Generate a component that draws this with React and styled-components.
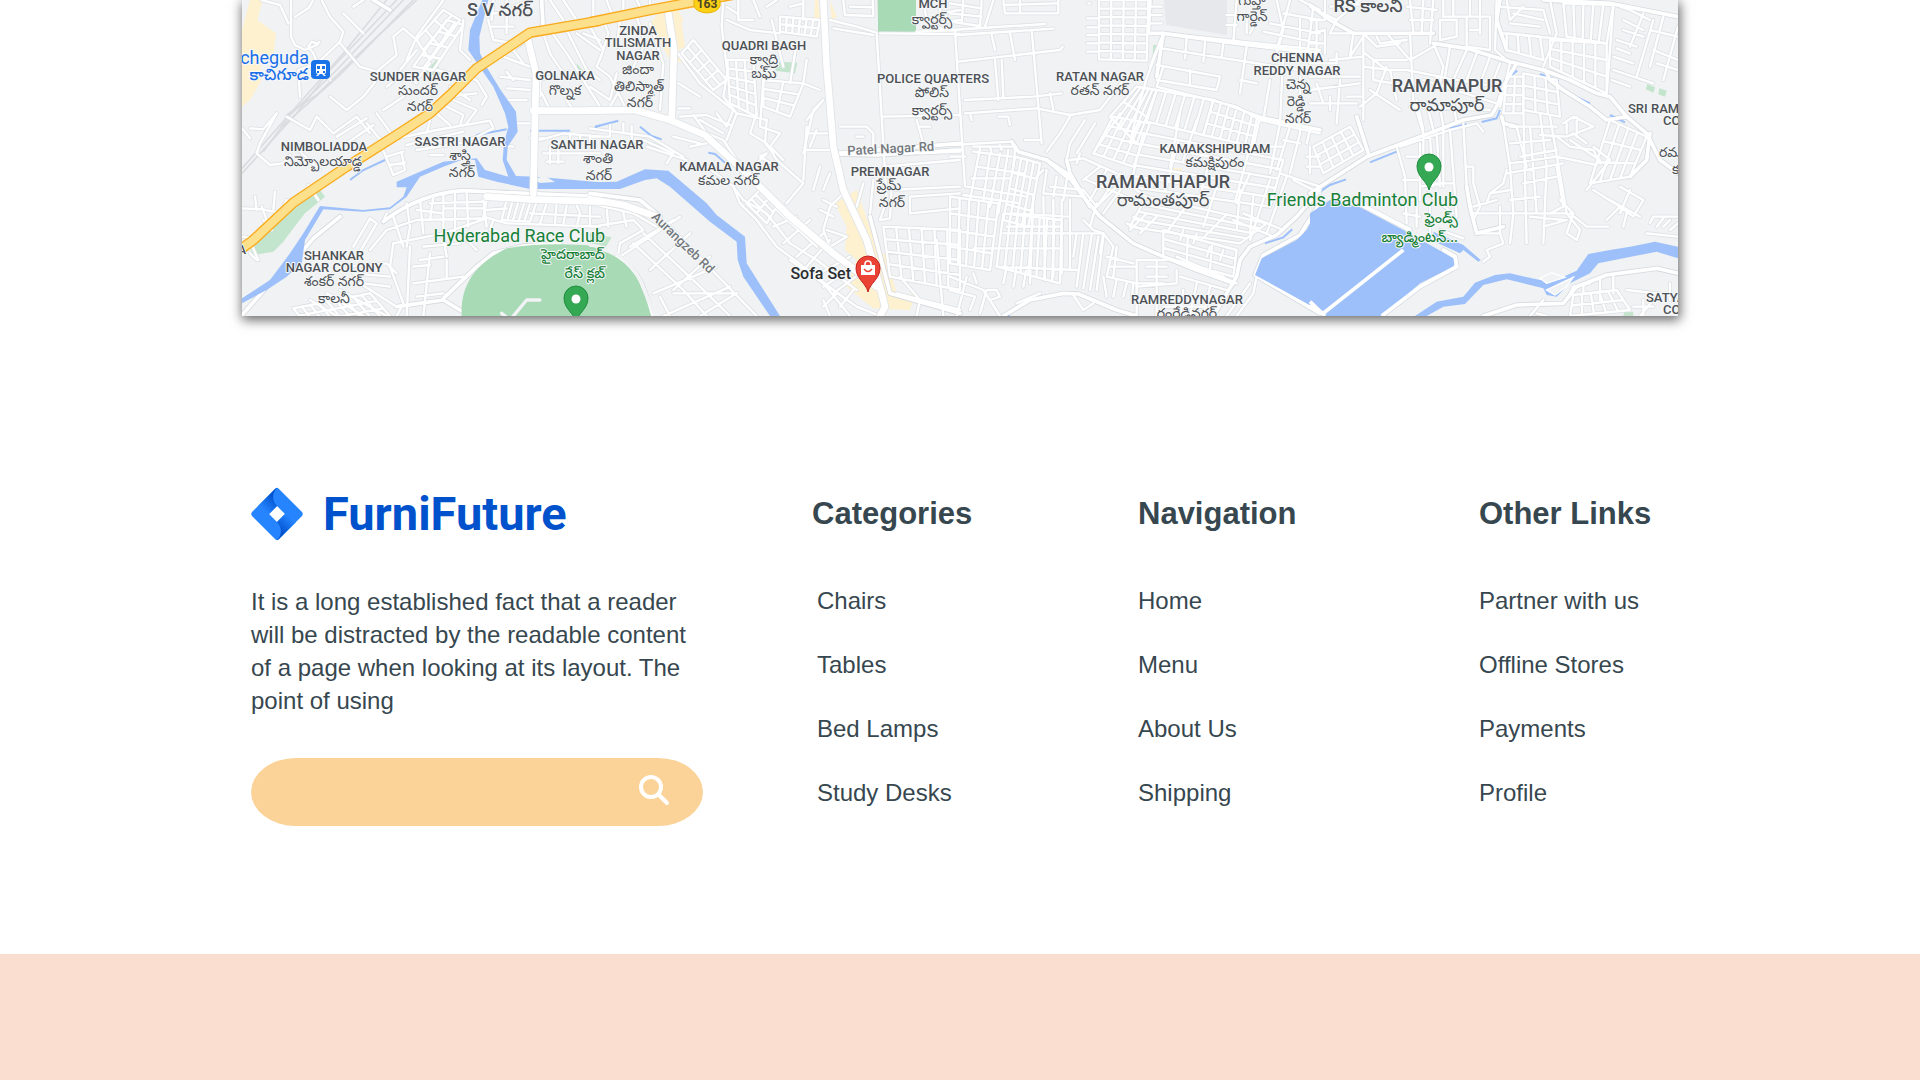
import React from 'react';
import styled, { createGlobalStyle } from 'styled-components';

const GlobalStyle = createGlobalStyle`
  *, *::before, *::after { box-sizing: border-box; }
  body { margin: 0; background: #fff; color: #37474f; font-family: "Liberation Sans", Arial, sans-serif; }
  h2, p, ul { margin: 0; padding: 0; }
`;

const Page = styled.div`
  display: flex;
  flex-direction: column;
  min-height: 100vh;
`;

const Container = styled.div`
  width: 100%;
  max-width: 1436px;
  margin: 0 auto;
`;

const MapFrame = styled.section`
  overflow: hidden;
  box-shadow: 1px 3px 11px 1px rgba(0, 0, 0, 0.6);
`;

const MapDrawing = styled.svg`
  display: block;
  width: 100%;
  height: auto;
`;

const MapText = styled.text`
  font-family: Roboto, "Noto Sans Telugu", "Noto Sans", sans-serif;
  font-size: ${(p) => p.$size}px;
  font-weight: ${(p) => p.$weight};
  fill: ${(p) => p.$color};
  stroke: ${(p) => (p.$plain ? 'none' : '#f6f8f9')};
  stroke-width: 2px;
  stroke-linejoin: round;
  paint-order: stroke;
`;

const FooterGrid = styled.footer`
  display: grid;
  grid-template-columns: 561fr 326fr 341fr 190fr;
  padding: 168px 9px 128px;
`;

const Brand = styled.div`
  display: flex;
  flex-direction: column;
  max-width: 452px;
`;

const LogoLink = styled.a`
  display: flex;
  align-items: center;
  gap: 20px;
  height: 60px;
  color: #0052cc;
  font-family: Roboto, sans-serif;
  font-size: 47px;
  font-weight: 700;
  line-height: 60px;
  text-decoration: none;
`;

const About = styled.p`
  margin-top: 41px;
  font-size: 24px;
  line-height: 33px;
`;

const SearchForm = styled.form`
  display: flex;
  align-items: center;
  height: 68px;
  margin-top: 41px;
  padding: 0 28px;
  border-radius: 45px / 34px;
  background: #fbd399;
`;

const SearchInput = styled.input`
  flex: 1;
  min-width: 0;
  height: 44px;
  border: 0;
  outline: 0;
  background: transparent;
  color: #37474f;
  font: inherit;
  font-size: 24px;
`;

const SearchButton = styled.button`
  display: flex;
  padding: 0 5px 4px;
  border: 0;
  background: transparent;
  cursor: pointer;
`;

const Column = styled.nav`
  display: flex;
  flex-direction: column;
  gap: 40px;
`;

const ColumnTitle = styled.h2`
  font-size: 31px;
  font-weight: 700;
  line-height: 60px;
  white-space: nowrap;
`;

const LinkList = styled.ul`
  display: flex;
  flex-direction: column;
  gap: 30px;
  padding-left: ${(p) => (p.$indent ? 5 : 0)}px;
  list-style: none;
`;

const FooterLink = styled.a`
  display: block;
  color: inherit;
  font-size: 24px;
  line-height: 34px;
  text-decoration: none;
  white-space: nowrap;
`;

const BottomBand = styled.div`
  flex: 1;
  min-height: 126px;
  background: #fadfd1;
`;

/* Streets filling a four-cornered block: a-b is the top side, d-c the bottom. */
const block = (ax, ay, bx, by, cx, cy, dx, dy, down, across) => {
  let d = '';
  for (let i = 0; i <= down; i++) {
    const t = i / down;
    d += `M${ax + (bx - ax) * t} ${ay + (by - ay) * t}L${dx + (cx - dx) * t} ${dy + (cy - dy) * t}`;
  }
  for (let i = 0; i <= across; i++) {
    const t = i / across;
    d += `M${ax + (dx - ax) * t} ${ay + (dy - ay) * t}L${bx + (cx - bx) * t} ${by + (cy - by) * t}`;
  }
  return d;
};

/* The map is drawn in four sheets, each in thirds of a pixel. */
const sheets = [
  {
    x: 230,
    sand: ['M60 0L98 0 82 60 138 100 130 170 90 185 95 240 60 300 36 320V90Z'],
    parks: ['M270 570L285 590 225 640 190 685 160 725 130 755 70 765 60 745 190 625Z', 'M580 225L620 178 630 225Z', 'M1040 190L1068 225 1040 225Z'],
    club: ['M695 948C690 850 740 790 830 745Q930 725 1110 738V948Z'],
    rail: ['M36 520L200 340 300 210 500 0', 'M36 505L190 330 340 160 470 0', 'M150 385L330 225 550 0', 'M100 455L180 345 320 210 520 0', 'M170 345L260 285 420 130 560 0'],
    water: [
      'M757 0H775L748 110 750 160 772 205 812 270 858 335 863 395 833 440 830 480 858 528 920 530 1110 547V567H900L800 545 745 530 735 480 700 478 640 500 570 530 530 590 480 628 400 635 280 628 225 720 215 790 170 830 110 870 36 910V895L120 840 180 760 220 700 270 618 400 630 480 622 520 590 530 562H500V545L640 485 740 475 765 510 835 530 818 480 822 430 835 380 825 340 790 260 745 195 715 150 720 90Z',
    ],
    creek: ['M360 540L400 510 465 480', 'M740 405L830 388', 'M900 392H1020', 'M1095 382L1110 376'],
    minor: [
      'M183 0V110L195 135 225 150 260 135 268 125M95 0L150 15 175 70M195 50L235 25 250 0M275 0L300 50 340 95 330 125 262 190 250 160 235 140 245 125 260 130M370 20L400 0M340 40L400 100M330 130L390 200 440 215 500 165 490 110 520 85 560 120M262 190L205 210 210 290M60 385L100 388 140 340M36 385L60 415M140 340L90 430 80 460 120 495 160 490 180 465M205 450L270 510M170 350L240 390 260 350 310 400 380 350 420 400M260 190L300 240M300 290L350 330 400 290 440 240M320 410L410 355M350 430L430 375M440 340L490 410M410 370L460 430M530 180L560 110 640 0M460 330L520 290M470 260L520 220 560 250',
      block(650, 60, 700, 75, 610, 210, 550, 200, 2, 4),
      block(560, 120, 640, 30, 690, 60, 600, 180, 3, 2),
      'M480 230L560 240 600 190M510 210L560 150M700 60L690 150 720 180M620 210L740 240 770 290 755 315M660 260L720 300M650 290L740 280M775 60L790 120 850 130M780 80H850M780 40H830M830 0V100M790 0L785 60M850 20L900 0M850 150L880 190M820 170L900 200M810 230L900 240M830 265L900 270M830 215L850 240M820 300H890M850 340V370H900M960 90L1010 160 1110 320M1010 90L1070 210 1110 240M940 100L960 160 1000 220M960 0L1000 60M1000 0L1040 60M1040 100L1110 150M1060 100L1110 120M930 240L960 230M1010 300L1030 330M930 270L960 330M930 290V220',
      'M500 415L620 390 780 362 790 385 720 420M530 435L700 395M560 450L720 425 850 440M600 360L590 400M650 320L700 345 690 375M670 300L740 330 710 370M620 340L660 375M455 440L490 525 525 510 515 460M470 470L520 455M480 495L525 488M600 465H640M550 360L600 330',
      'M930 420L1000 400 1110 410M940 460H1110M950 485H1000M960 440V490M985 440V490M1020 400V430M1050 405V440M1080 405V440M900 415H950M1070 460V490',
      'M36 625L100 628 150 640 170 600M135 575L130 630M75 590L80 630M95 620L110 660M100 660L125 690M65 735L85 780M300 530L330 510M235 555L265 600M36 710L70 715M60 760L80 780',
      'M470 690L560 660 760 655M490 730L640 700 770 655M530 610L540 680 530 740M570 600L580 700M610 590L600 660M640 580V700M675 580V690M710 580L715 680M560 630L640 640M600 610L760 605M640 625H760M490 650L520 740M460 665L470 640',
      block(830, 600, 920, 605, 900, 665, 815, 660, 5, 1),
      'M770 600L760 650 830 670 1110 680M770 630L830 625M950 610L930 670M980 610L975 670M1010 615L1000 675M1040 615L1050 640 1040 680M1080 620V680M900 640L1110 650M790 660L780 690',
      'M390 755L440 670 420 655 370 740M420 750L470 690M350 800L470 790 500 820M370 820L480 830M400 850L480 860M490 730L480 800 520 910 500 948M570 780L640 770M550 850L700 830M600 760L580 948M540 740L530 948M690 700L740 750M760 600L770 680M640 710L650 770M580 740L690 730M550 800L600 795M560 890L640 880M650 780L650 830',
      block(190, 925, 420, 880, 480, 948, 240, 990, 9, 3),
      'M240 900L320 948M290 880L400 948M330 870L470 948M390 850L500 920',
    ],
    streets: [
      'M36 945L120 850 220 750 250 715 330 650',
      'M460 665Q570 580 700 572L1110 590',
      'M640 895L740 800 790 760 880 738 990 730',
      'M500 920L640 900 720 948',
      'M845 150L900 110M940 92L935 0M430 0L480 30',
    ],
    major: ['M890 105L918 220 910 580', 'M910 332H1110', 'M770 590L900 598 1110 605'],
    clubRoad: ['M815 940L840 960 890 900 930 900'],
    highway: ['M36 745L70 720 190 608 350 500 500 405 600 340 660 285 740 205 830 145 900 98 1110 62'],
  },
  {
    x: 590,
    sand: ['M275 70L280 60 265 30 310 25 390 20 400 0H240L180 70 240 180 290 190 265 150 285 140Z', 'M675 0H685L690 60 672 60ZM720 0L740 50 725 60Z', 'M735 610L800 570 860 740 890 770 920 880 975 885 960 930 850 925 770 860 800 780 765 750 770 680Z'],
    parks: ['M862 0H978V95L865 102Z', 'M570 185L622 188 615 220 555 212Z', 'M0 700L65 712 45 745 0 740Z'],
    club: ['M0 745Q85 755 135 825Q160 860 183 948H0Z'],
    rail: [],
    water: ['M0 547L80 545 165 508 235 512 350 610 380 645 465 710 470 790 570 948H540L460 830 443 780 440 725 360 665 240 560 200 535 165 540 90 567H0Z'],
    creek: ['M15 380L85 362', 'M150 380L185 408 215 418', 'M355 458L375 462 405 488'],
    minor: [
      'M0 80L40 150 20 200 60 230 110 330M40 60L55 100 30 180M140 50L165 130 130 200 150 220M90 60L80 140M180 70L220 190 210 330M10 0V50M50 0L65 40M100 0V35M140 0L155 30M180 0V25M0 260L60 300 80 220M60 320L100 250',
      block(275, 160, 310, 120, 410, 240, 370, 270, 2, 4),
      'M260 155L330 250 430 330 410 380 380 340M265 250L330 290M265 325H300M270 350L350 345 420 375M400 0L395 80 412 215 400 290 440 340 530 360M410 60L480 90 570 100M445 0V60L490 60M490 0L510 50M530 20L560 0M410 20L440 40',
      block(570, 50, 690, 60, 680, 110, 570, 95, 6, 2),
      block(412, 180, 490, 180, 500, 350, 420, 310, 3, 5),
      block(520, 240, 640, 250, 600, 350, 520, 320, 2, 3),
      'M620 130L600 250M650 180L640 250 690 270M545 60L580 200M520 240L510 380 570 400 540 440 580 480M640 0V60M600 20L640 10M500 340L480 400 530 430 560 480 640 550 590 610M650 380L640 540M655 400H730M650 450H740M650 360L700 300 670 330 640 460M680 390L660 440M690 500L670 570M720 520L700 570M530 360L525 430 550 460M440 340L410 420M310 345L350 400 400 420 440 480 500 520M0 385L180 410 280 470M100 370V400M60 375V410M125 378V420M160 420L250 460 230 490M250 410L330 430M170 440L290 480M0 410H60M330 360L400 400M300 440L350 430M490 500L530 460 510 470 560 500M350 500L430 560 450 610 500 660 560 740 640 800 770 900M430 560L460 600 530 640 600 730 680 780 800 870',
      block(510, 570, 560, 620, 530, 670, 470, 610, 2, 3),
      'M560 630L680 740M550 680L620 650M580 730L660 660M620 770L700 700M650 800L720 720M670 830L780 770M700 860L790 800M730 880L810 820M700 600L740 620M690 630L730 650M710 690L770 710 720 740 700 690 720 620 760 580',
      'M720 60L800 80 860 98M730 85L850 105M750 380H830L850 400V460M860 100L890 600 870 660 900 655 905 560M980 95L1110 90M880 350L1110 345M870 100L1110 102M800 410H820M980 360L1000 430M990 380H1020M820 550L800 620M850 540L840 640M960 590L1110 580M960 640L1110 625M960 590V640M990 460L1110 455M880 500L1110 480M900 570L1110 560M760 0L765 45 850 48 848 0M780 20L850 22M1050 0V40L1110 30M1000 0L1010 60 1060 90M1110 60L1030 70',
      'M0 610L130 640 200 680M50 620L55 680M100 640L110 680M10 680L130 660 160 690 90 730 85 760M130 730L280 870 350 948M160 700L320 850 420 948M230 670L500 948M90 770L270 650M190 880L380 800M220 948L420 860M250 880L440 880M210 890L240 948M120 740L250 660M180 810L300 700M250 870L360 770M330 948L440 880',
      block(880, 680, 1110, 690, 1110, 870, 900, 830, 6, 4),
      'M600 780L800 920 870 948M640 800L700 850 780 948M700 900L720 948M740 880L700 920M790 870L750 920M930 830L990 900 980 948M1040 720L1060 948M920 880L1110 930',
    ],
    streets: ['M740 460L1110 430', 'M740 462L860 465 1110 450', 'M840 650L900 880 1110 940', 'M0 580L150 600 210 650', 'M80 770Q130 800 155 850L190 948'],
    major: ['M0 332L135 330 240 360 345 405 470 520 600 650 730 760 860 860', 'M235 40L252 150 245 360', 'M700 0L710 200 730 440 760 570 830 720 875 880 885 920 870 948', 'M0 598L100 615 200 650'],
    clubRoad: ['M0 735Q100 745 150 840L195 948'],
    highway: ['M0 67L180 30 330 2 480 -25'],
  },
  {
    x: 950,
    sand: ['M668 505H695V520H668Z'],
    parks: ['M610 135H630L625 162H608Z'],
    club: [],
    rail: [],
    water: ['M1110 615L1070 690 1040 720 935 775 915 825 1110 932Z'],
    creek: ['M945 730L1000 712 1027 688', 'M170 948H180'],
    minor: [
      'M0 10L95 25M0 40L95 50M0 65L90 78M95 0L90 78M40 0L35 70M160 0L165 40H325V0M210 0V38M160 15L320 10M130 0L105 80M0 90L285 72M20 105L310 86M25 185L330 150 338 140M15 95L45 560M180 100L195 180M245 90L275 430M125 105L135 150M135 180L145 300M155 180L160 290M45 300L250 290 335 280M45 340L260 325 360 345M300 280L310 330M60 340L65 360M145 350H175L180 375M225 420H270M0 435L185 425 195 450 190 500',
      block(447, 0, 595, 0, 590, 182, 447, 178, 4, 7),
      'M412 55H447M412 82H447M412 105H447M412 130H447M412 155H447M415 10H420M595 20H635M595 45H635M595 70H635M640 100L590 235 560 340 540 430M600 200L640 100 1110 150M635 145L1110 220M710 115L705 175M765 125L760 185M820 130L815 170M890 140L870 280M620 195L810 230 800 270 620 240M720 210V250M640 200L620 260 860 320 930 360 1110 400M940 95L1110 130M980 0L1000 90 980 160M860 0L850 125M1020 0L980 150M1050 0L1110 30M1000 40L1110 60M960 70L1110 100M920 60L900 100M890 60V100M830 75H860M830 45H860M1050 50V150M1090 20L1070 180',
      block(480, 350, 560, 260, 620, 270, 560, 430, 2, 5),
      block(620, 270, 790, 300, 760, 405, 590, 365, 6, 1),
      block(790, 300, 930, 350, 910, 440, 760, 405, 6, 3),
      block(490, 350, 600, 370, 550, 500, 430, 460, 4, 4),
      block(580, 400, 1000, 480, 960, 620, 540, 560, 4, 5),
      block(590, 590, 950, 670, 870, 730, 540, 680, 3, 4),
      'M690 340L660 500M740 360L700 480M800 560L760 680M870 570L860 690M910 590L900 700M470 510L420 600M510 520L440 620M540 530L460 640',
      block(640, 690, 860, 750, 850, 830, 640, 770, 3, 3),
      'M700 690L690 720M740 700L730 730M780 740L770 770M820 750L810 780M680 770L860 850M690 790L820 830M690 830L830 870',
      'M560 780H650M590 800H650M590 830H650M620 780V948M560 850H640M680 810V850L560 860M740 850L720 948M780 860L760 948M650 890L800 890M700 870L690 948M640 920H760',
      'M460 700L490 740 470 830 560 850M500 740L490 830M470 770L550 790M480 800H560M460 830L470 890M500 840L490 890M530 850L520 890M550 850L545 900',
      'M350 480L360 430 405 360M380 460L435 370M390 460L380 490M360 480L400 475 500 520M430 460L490 370 510 340M360 345L450 330 520 240M360 350L330 400 290 455M400 540L450 500M410 540L550 600M400 570L440 620M440 620L520 540 600 600M540 690L590 640M570 700L620 650M530 670L580 690M550 650L600 670',
      'M70 440H185M120 440L125 460M150 435L155 450M70 455L185 470M90 445L60 600M120 460L100 600M150 460L120 620M175 450L145 640M65 535H180M50 560L230 590M40 585L210 610M80 500L220 520',
      block(195, 470, 270, 490, 235, 680, 160, 660, 4, 4),
      'M290 510L280 580 400 590M320 530L310 590M350 540L340 600M300 560L400 570M260 530L280 510',
      block(0, 590, 145, 610, 120, 810, 0, 790, 5, 4),
      block(160, 640, 335, 660, 330, 850, 140, 800, 8, 1),
      'M170 680H335M160 700H460M70 745H335M140 800L380 810M180 640L360 650M360 600V810M380 700L370 770M400 700L380 860M425 705L400 865M445 710L420 870M460 710L440 870M335 600V820M310 600V830M280 590L285 840M250 590L240 850M230 800L220 860M200 800L190 860M170 800L160 850',
      'M0 830L100 870 150 948M0 870L75 890 60 930M50 830L20 948M70 820L80 850M110 870L90 940M115 870H140L150 890 120 900M0 450H40M0 470H45M440 610L420 680M400 660L430 690 460 700 450 760',
      'M920 360L900 460M960 240L940 360M1000 160L990 370 960 520M1050 230V400L1020 520M1080 390L1070 430M1020 380L980 510M870 240L920 250M900 520L860 610M930 440H1000M1000 420L1050 430M990 520L1110 560M1030 540L1110 580M960 540L900 720M1010 530L950 700M880 640L1000 690M850 660L970 710M1080 440V520M1110 470H1070M1110 500H1070',
      'M920 830L910 880 860 948M900 850L830 948M560 900L660 890 700 948M560 780V948M160 948L230 905M200 910L270 880M370 885L400 930 430 910',
    ],
    streets: [
      'M185 425L205 455 290 480 350 520 400 590 450 650 550 730 640 770 740 810 850 850',
      'M290 480L355 535M350 480L360 520 420 620',
      'M160 948L240 900 340 880 385 882 500 930 560 948',
      'M600 0L595 100 640 100 620 230',
      'M640 100L860 130 1110 160',
      'M1110 570L1040 650 980 705 900 740 870 780 860 830 790 948',
      'M1110 610L1050 705 940 765 915 825 1110 940',
      'M920 350L1110 390',
    ],
    major: [],
    clubRoad: [],
    highway: [],
  },
  {
    x: 1310,
    sand: [],
    parks: ['M1012 252L1035 262 1030 278 1008 268ZM1048 265L1070 272 1065 290 1045 283Z', 'M942 936H970V948H940Z'],
    club: [],
    rail: [],
    water: [
      'M0 640L60 600 150 622 280 690 440 780 430 800 330 850 220 948H45L0 915Z',
      'M370 695L460 735 512 780 505 785 460 750 450 760 375 725Z',
      'M315 948L380 905 460 890 495 848 555 825 600 820 690 840 760 830 800 812 835 762 900 750 960 740 1035 725 1104 740V775L1040 755 940 775 865 790 840 820 780 850 740 890 710 885 700 865 640 850 590 838 520 855 465 912 400 920 350 948Z',
    ],
    creek: ['M0 595L60 555 108 538', 'M180 487L260 455', 'M580 265L590 235 622 212', 'M420 385L470 373', 'M515 366L560 355 570 330', 'M690 222L745 243', 'M790 287L840 310', 'M900 345L945 367'],
    minor: [
      'M0 20L80 60 60 100 130 100M80 60L150 0M60 20L190 10M130 100L120 170 160 110M160 100V360M160 100L200 140 270 130M0 60H45V0M0 100L45 90V160M0 130H45M20 60V160M0 190H80V160M60 180L160 170M0 230L150 230M20 250L40 310M0 270L150 250M0 310H140M90 240L80 370M110 290L160 290M60 290V330M230 100L300 180 370 140M200 110L210 130 290 120M165 160L230 210 290 210 390 230M230 200L200 280 150 320M160 200L240 210 260 300M190 180H290M190 180V240L250 250M210 290L240 310M180 270L270 330',
      'M290 20L380 30M300 0L310 95M340 0L335 95M300 60H370',
      'M370 0L360 130M390 60V120L440 110V60ZM400 0V50H540M430 0V50M470 50V140L540 150V50M480 0V50M510 0V100M480 90H510M560 0L555 150 600 190M370 130L400 200 390 250M300 100L310 300 340 400M420 140L400 260M470 150L430 240M500 160L470 240M540 170L510 250M570 190L540 270M600 190L570 320M380 230L560 260M340 240L560 310',
      block(590, 100, 690, 110, 700, 180, 590, 150, 3, 1),
      'M560 20L700 30 720 100M590 0L600 60 640 20M610 40L700 60M600 70L690 80M720 0L740 100 700 200M580 100L890 130',
      block(760, 10, 910, 15, 890, 130, 770, 110, 5, 0 + 1),
      block(720, 120, 890, 130, 890, 280, 720, 200, 5, 3),
      'M910 20L890 280M930 20L960 30 1020 60M1000 40L960 140M940 60L1000 90M920 120L980 140M910 170L970 190M910 210L1030 250M1030 60L980 230M1060 50L1020 200M1104 80L1060 240M1020 90L1104 110M1030 150L1104 180M1040 190L1104 210M940 90L1000 110M920 145L960 160M905 240L960 260',
      block(10, 440, 120, 380, 160, 450, 40, 520, 4, 3),
      'M260 440L285 530 290 670M290 470H340M280 540H330V480M290 600H320V680M330 430V600M360 410L370 560M380 400L390 560M400 390L400 560M420 390L440 650M360 550H430M350 580L430 640M280 640L330 650M340 400V460M270 440L420 390 500 370 520 395M460 370L470 560 500 700M470 500L490 500 490 550 510 620 490 660M330 560L400 550M360 620V700M390 690L460 715M320 300L340 390M350 310L370 390M390 320L400 380M430 310L440 370M300 320L540 330',
      block(590, 230, 640, 230, 640, 340, 580, 340, 2, 4),
      block(640, 220, 740, 240, 750, 350, 640, 330, 3, 3),
      'M580 370L600 500 610 640 600 730M620 380L650 500M640 330L650 730M660 380L680 640M690 340L710 500 700 730M720 350L770 640M600 380H740M600 430L720 420M630 470L740 450M690 405L770 410 850 380 790 350 760 370M770 370V400M800 350V410M740 410L780 440 850 450 870 490M600 490L740 470 860 495M590 520L760 490M540 580L580 550 590 510M530 610L540 580 600 570M570 620V700L500 700M490 620L560 600M490 640H770M600 600L690 590M660 650L760 660M700 680L770 660M640 550L740 530M570 700L580 730 530 750 540 770 520 785',
      block(900, 360, 1010, 410, 960, 530, 840, 550, 4, 3),
      'M850 440L900 480 830 570M850 570L930 620 890 660M930 560L1000 600 970 650 930 620M960 570L930 640M900 600L990 650M950 640L940 680M750 600L790 640 770 700 800 720M780 640L830 680H895M770 640L810 690 800 720M740 500L760 620 720 640M1020 670L1030 650H1104M1040 680L1060 655M1060 680L1080 660M1080 690L1104 670M1010 700L1104 710M790 400L830 430M780 420L870 480',
      block(790, 885, 920, 870, 960, 930, 780, 948, 5, 2),
      'M820 850V880M870 840V900M910 830V880M950 870L1040 880 1104 890M1080 850V900M1000 900V948M970 920H1030M680 940L710 948M700 900L660 948M1030 900L990 948M770 900L790 860 840 850M400 750L440 780M0 915L45 948',
    ],
    streets: [
      'M0 580L170 470 370 395 460 360 545 345 560 320 585 250 620 190',
      'M370 130L470 145 600 185 700 210 780 240 860 280 900 290 950 350 1010 400 1050 480 1104 520',
      'M130 100H370M140 350L175 460M0 15L60 60 130 100M570 0L560 60 590 150M700 0L900 10 1104 50',
      'M45 948L280 750', 'M150 612L300 690',
      'M215 948L330 860 440 800 435 770 400 750',
      'M520 948L620 915 760 910 800 860 890 825 1040 805 1104 820',
      'M705 210L720 240 760 270 840 320 890 360 950 350',
      'M575 350L580 370 620 380M1020 400L1010 480 960 530M470 560L480 620 500 700 580 680',
    ],
    major: [],
    clubRoad: [],
    highway: [],
  },
];

const casings = [
  ['minor', '#dfe2e5', 12],
  ['streets', '#d7dbdf', 16],
];
const surfaces = [
  ['minor', '#fff', 7],
  ['streets', '#fff', 11],
];
const mainRoads = [
  ['major', '#e0e3e6', 25],
  ['major', '#fff', 20],
  ['clubRoad', '#f1f3f4', 10],
];

const gray = '#4d5156';
const green = '#188038';
const blue = '#1a6fe8';

const styles = {
  area: [13, 500, gray],
  small: [14, 400, gray],
  town: [18, 500, gray],
  townTe: [18, 400, gray],
  green: [18, 400, green],
  greenTe: [14, 500, green],
  blue: [18, 400, blue],
  blueTe: [16, 500, blue],
  road: [13, 500, '#74787d'],
  place: [16, 500, '#2b2d30'],
};

/* x, baseline, text, style, anchor, rotation */
const labels = [
  [500, 16, 'S V నగర్', 'town'],
  [309, 64, 'acheguda', 'blue', 'end'],
  [309, 80, 'కాచిగూడ', 'blueTe', 'end'],
  [418, 81, 'SUNDER NAGAR', 'area'],
  [418, 95, 'సుందర్', 'small'],
  [420, 111, 'నగర్', 'small'],
  [324, 151, 'NIMBOLIADDA', 'area'],
  [323, 166, 'నిమ్బోలయాడ్డ', 'small'],
  [460, 146, 'SASTRI NAGAR', 'area'],
  [460, 160, 'శాస్త్రి', 'small'],
  [462, 177, 'నగర్', 'small'],
  [565, 80, 'GOLNAKA', 'area'],
  [565, 95, 'గొల్నక', 'small'],
  [597, 149, 'SANTHI NAGAR', 'area'],
  [598, 163, 'శాంతి', 'small'],
  [599, 180, 'నగర్', 'small'],
  [334, 260, 'SHANKAR', 'area'],
  [334, 272, 'NAGAR COLONY', 'area'],
  [334, 286, 'శంకర్ నగర్', 'small'],
  [334, 303, 'కాలనీ', 'small'],
  [605, 242, 'Hyderabad Race Club', 'green', 'end'],
  [605, 259, 'హైదరాబాద్', 'greenTe', 'end'],
  [605, 278, 'రేస్ క్లబ్', 'greenTe', 'end'],
  [246, 254, 'A', 'area', 'end'],
  [638, 35, 'ZINDA', 'area'],
  [638, 47, 'TILISMATH', 'area'],
  [638, 60, 'NAGAR', 'area'],
  [638, 74, 'జిందా', 'small'],
  [639, 91, 'తిలిస్మాత్', 'small'],
  [640, 107, 'నగర్', 'small'],
  [764, 50, 'QUADRI BAGH', 'area'],
  [764, 64, 'క్వాద్రి', 'small'],
  [764, 78, 'బఘ్', 'small'],
  [729, 171, 'KAMALA NAGAR', 'area'],
  [729, 185, 'కమల నగర్', 'small'],
  [933, 83, 'POLICE QUARTERS', 'area'],
  [932, 97, 'పోలిస్', 'small'],
  [932, 115, 'క్వార్టర్స్', 'small'],
  [933, 8, 'MCH', 'area'],
  [932, 24, 'క్వార్టర్స్', 'small'],
  [891, 153, 'Patel Nagar Rd', 'road', 'middle', -3],
  [890, 176, 'PREMNAGAR', 'area'],
  [889, 190, 'ప్రేమ్', 'small'],
  [892, 207, 'నగర్', 'small'],
  [680, 246, 'Aurangzeb Rd', 'road', 'middle', 44],
  [851, 279, 'Sofa Set', 'place', 'end'],
  [1100, 81, 'RATAN NAGAR', 'area'],
  [1100, 95, 'రతన్ నగర్', 'small'],
  [1215, 153, 'KAMAKSHIPURAM', 'area'],
  [1215, 167, 'కమక్షిపురం', 'small'],
  [1163, 188, 'RAMANTHAPUR', 'town'],
  [1163, 206, 'రామంతపూర్', 'townTe'],
  [1187, 304, 'RAMREDDYNAGAR', 'area'],
  [1187, 318, 'రంరేడినగర్', 'small'],
  [1252, 5, 'గుప్తా', 'small'],
  [1252, 21, 'గార్డెన్', 'small'],
  [1297, 62, 'CHENNA', 'area'],
  [1297, 75, 'REDDY NAGAR', 'area'],
  [1298, 89, 'చెన్న', 'small'],
  [1296, 106, 'రెడ్డి', 'small'],
  [1298, 123, 'నగర్', 'small'],
  [1368, 12, 'RS కాలని', 'town'],
  [1447, 92, 'RAMANAPUR', 'town'],
  [1447, 111, 'రామాపూర్', 'townTe'],
  [1458, 206, 'Friends Badminton Club', 'green', 'end'],
  [1458, 223, 'ఫ్రెండ్స్', 'greenTe', 'end'],
  [1458, 242, 'బ్యాడ్మింటన్...', 'greenTe', 'end'],
  [1628, 113, 'SRI RAMA', 'area', 'start'],
  [1663, 125, 'CO', 'area', 'start'],
  [1659, 157, 'రమ', 'small', 'start'],
  [1672, 174, 'క', 'small', 'start'],
  [1646, 302, 'SATYA', 'area', 'start'],
  [1663, 314, 'CO', 'area', 'start'],
];

const Pin = ({ x, y, color, edge, children }) => (
  <g transform={`translate(${x} ${y})`}>
    <path d="M0 0C-2 -9 -12 -13 -12 -24A12 12 0 0 1 12 -24C12 -13 2 -9 0 0Z" fill={color} stroke={edge} />
    {children}
  </g>
);

const layer = (key, props) =>
  sheets.map((s) => (
    <g key={s.x} transform={`translate(${s.x} 0) scale(${1 / 3})`}>
      {s[key].map((d, i) => (
        <path key={i} d={d} {...props} />
      ))}
    </g>
  ));

const Roads = ({ set }) =>
  set.map(([key, stroke, strokeWidth]) => (
    <g key={key + strokeWidth}>
      {layer(key, { fill: 'none', stroke, strokeWidth, strokeLinecap: 'round', strokeLinejoin: 'round' })}
    </g>
  ));

const CityMap = () => (
  <MapDrawing viewBox="242 0 1436 316" role="img" aria-label="City map">
    <rect x="242" width="1436" height="316" fill="#f0f2f4" />
    <path d="M1164 0H1227V35L1166 25Z" fill="#e6e8eb" />
    {layer('sand', { fill: '#fef1d0' })}
    {layer('parks', { fill: '#c3e5cd' })}
    <path d="M878 0H916V32L878 34Z" fill="#a8dab5" />
    {layer('rail', { fill: 'none', stroke: '#dadce0', strokeWidth: 5 })}
    <Roads set={casings} />
    {layer('creek', { fill: 'none', stroke: '#9dc0fa', strokeWidth: 6 })}
    <Roads set={surfaces} />
    {layer('club', { fill: '#a8dab5' })}
    {layer('water', { fill: '#9dc0fa' })}
    <g transform="translate(1310 0) scale(0.3333)">
      <path d="M690 835L725 818 765 832 710 850Z M710 870L790 832 770 860 735 885Z" fill="#f0f2f4" stroke="#fff" strokeWidth="4" />
      <path d="M0 915L40 940 280 750M0 905L45 948M150 612L300 690M215 948L330 860 440 800 435 770 400 750" fill="none" stroke="#fff" strokeWidth="11" strokeLinejoin="round" />
    </g>
    <path d="M533 179L545 176 555 182 540 183Z" fill="#f0f2f4" />
    <Roads set={mainRoads} />
    {layer('highway', { fill: 'none', stroke: '#f9ab1d', strokeWidth: 32, strokeLinejoin: 'round' })}
    {layer('highway', { fill: 'none', stroke: '#fde08c', strokeWidth: 24, strokeLinejoin: 'round' })}

    <path d="M694 -6H720V6Q718 12 707 13Q696 12 694 6Z" fill="#fbd116" stroke="#e8b400" />
    <MapText x="707" y="8" textAnchor="middle" $size={12} $weight={700} $color="#4d4526" $plain>163</MapText>

    <rect x="311" y="60" width="19" height="19" rx="4" fill="#1a73e8" />
    <path d="M317 64H325Q326 64 326 65V72Q326 74 324 74L326 76H324L322 74H320L318 76H316L318 74Q316 74 316 72V65Q316 64 317 64Z" fill="#fff" />
    <path d="M317 66H320V69H317ZM322 66H325V69H322ZM317 71H319V73H317ZM323 71H325V73H323Z" fill="#1a73e8" />

    {labels.map(([x, y, text, kind, anchor = 'middle', turn = 0]) => {
      const [size, weight, color] = styles[kind];
      return (
        <MapText
          key={`${x}-${y}`}
          x={x}
          y={y}
          textAnchor={anchor}
          transform={turn ? `rotate(${turn} ${x} ${y})` : undefined}
          $size={size}
          $weight={weight}
          $color={color}
        >
          {text}
        </MapText>
      );
    })}

    <Pin x={576} y={322} color="#34a853" edge="#1e8e3e"><circle cy="-23" r="4.5" fill="#fff" /></Pin>
    <Pin x={1429} y={190} color="#34a853" edge="#1e8e3e"><circle cy="-23" r="4.5" fill="#fff" /></Pin>
    <Pin x={868} y={292} color="#ea4335" edge="#c5221f">
      <path d="M-7 -27H7V-17H-7Z" fill="#fff" />
      <path d="M-3 -27V-28A3 3 0 0 1 3 -28V-27" fill="none" stroke="#fff" strokeWidth="1.6" />
      <path d="M-4 -23Q0 -18 4 -23" fill="none" stroke="#ea4335" strokeWidth="1.5" />
    </Pin>
  </MapDrawing>
);

const LogoMark = () => (
  <svg width="52" height="54" viewBox="0 0 52 54" aria-hidden="true">
    <defs>
      <linearGradient id="foldTop" x1="24" y1="6" x2="10" y2="20" gradientUnits="userSpaceOnUse">
        <stop offset="0.15" stopColor="#0052cc" />
        <stop offset="1" stopColor="#2684ff" />
      </linearGradient>
      <linearGradient id="foldBottom" x1="29" y1="48" x2="42" y2="34" gradientUnits="userSpaceOnUse">
        <stop offset="0.15" stopColor="#0052cc" />
        <stop offset="1" stopColor="#2684ff" />
      </linearGradient>
    </defs>
    <path
      fillRule="evenodd"
      d="M24.500 1.500Q26 0 27.500 1.500L51 25Q52.500 27 51 29L27.500 52.500Q26 54 24.500 52.500L1 29Q-0.500 27 1 25ZM26 19L18 27 26 35 34 27Z"
      fill="#2684ff"
    />
    <path d="M24.500 1.500L7 19 18 27 26 19C21 14 20.500 6 26 .9Z" fill="url(#foldTop)" />
    <path d="M27.500 52.500L45 35 34 27 26 35C31 40 31.500 48 26 53.100Z" fill="url(#foldBottom)" />
  </svg>
);

const SearchIcon = () => (
  <svg width="32" height="32" viewBox="0 0 32 32" fill="none" stroke="#fff" strokeWidth="4" strokeLinecap="round" aria-hidden="true">
    <circle cx="13" cy="13" r="10" />
    <path d="M20.500 20.500L29 29" />
  </svg>
);

const columns = [
  { title: 'Categories', links: ['Chairs', 'Tables', 'Bed Lamps', 'Study Desks'], indent: true },
  { title: 'Navigation', links: ['Home', 'Menu', 'About Us', 'Shipping'] },
  { title: 'Other Links', links: ['Partner with us', 'Offline Stores', 'Payments', 'Profile'] },
];

export default function App() {
  return (
    <Page>
      <GlobalStyle />
      <Container>
        <MapFrame>
          <CityMap />
        </MapFrame>
        <FooterGrid>
          <Brand>
            <LogoLink href="#home">
              <LogoMark />
              FurniFuture
            </LogoLink>
            <About>
              It is a long established fact that a reader will be distracted by the readable content of a page when
              looking at its layout. The point of using
            </About>
            <SearchForm role="search" onSubmit={(e) => e.preventDefault()}>
              <SearchInput type="search" aria-label="Search" />
              <SearchButton type="submit" aria-label="Search">
                <SearchIcon />
              </SearchButton>
            </SearchForm>
          </Brand>
          {columns.map(({ title, links, indent }) => (
            <Column key={title} aria-label={title}>
              <ColumnTitle>{title}</ColumnTitle>
              <LinkList $indent={indent}>
                {links.map((name) => (
                  <li key={name}>
                    <FooterLink href="#">{name}</FooterLink>
                  </li>
                ))}
              </LinkList>
            </Column>
          ))}
        </FooterGrid>
      </Container>
      <BottomBand />
    </Page>
  );
}
